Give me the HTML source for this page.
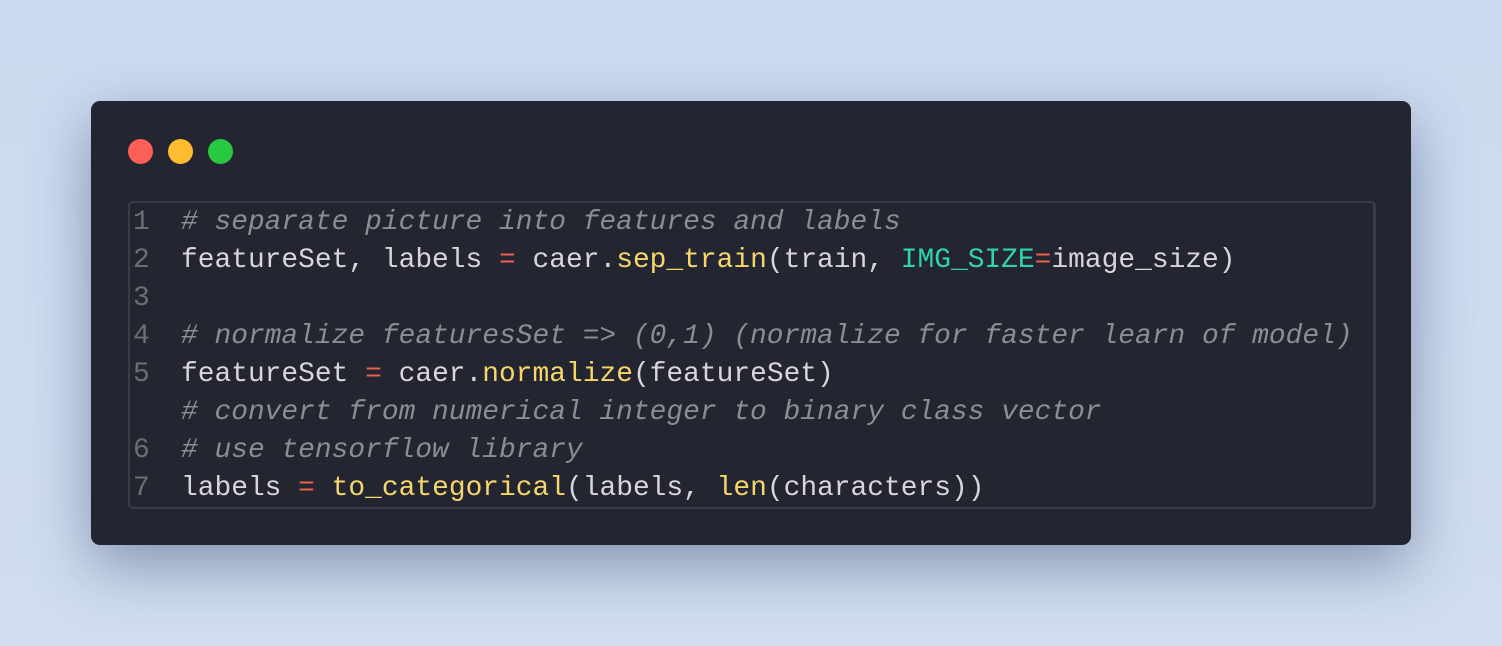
<!DOCTYPE html>
<html><head><meta charset="utf-8"><style>
html,body{margin:0;padding:0}
body{width:1502px;height:646px;background:linear-gradient(180deg,#cbdaf0,#d0ddf0);position:relative;overflow:hidden;font-family:"Liberation Mono",monospace}
.win{position:absolute;left:91px;top:101px;width:1320px;height:444px;background:#232530;border-radius:9px;box-shadow:0 20px 60px rgba(40,60,100,.45)}
.dot{position:absolute;top:38px;width:25px;height:25px;border-radius:50%}
.code{position:absolute;left:37px;top:100px;width:1243px;height:304px;border:2px solid #393c47;border-right-width:3px;border-radius:5px}
.ln{position:absolute;left:128px;top:204px;font-size:27.9px;line-height:38px;white-space:pre;color:#d9d4dd}
.n{color:#6e6d74;display:inline-block;width:48px;padding-left:5px}
.c{color:#8c8c93;font-style:italic}
.o{color:#e8614d}
.f{color:#f6d66a}
.t{color:#2fd3b0}
</style></head><body>
<div class="win">
<div class="dot" style="left:37px;background:#fe5f57"></div>
<div class="dot" style="left:77px;background:#febc2e"></div>
<div class="dot" style="left:117px;background:#28c840"></div>
<div class="code"></div>
</div>
<div class="ln"><span class="n">1</span><span class="c"># separate picture into features and labels</span>
<span class="n">2</span>featureSet, labels <span class="o">=</span> caer.<span class="f">sep_train</span>(train, <span class="t">IMG_SIZE</span><span class="o">=</span>image_size)
<span class="n">3</span>
<span class="n">4</span><span class="c"># normalize featuresSet =&gt; (0,1) (normalize for faster learn of model)</span>
<span class="n">5</span>featureSet <span class="o">=</span> caer.<span class="f">normalize</span>(featureSet)
<span class="n"> </span><span class="c"># convert from numerical integer to binary class vector</span>
<span class="n">6</span><span class="c"># use tensorflow library</span>
<span class="n">7</span>labels <span class="o">=</span> <span class="f">to_categorical</span>(labels, <span class="f">len</span>(characters))</div>
</body></html>
